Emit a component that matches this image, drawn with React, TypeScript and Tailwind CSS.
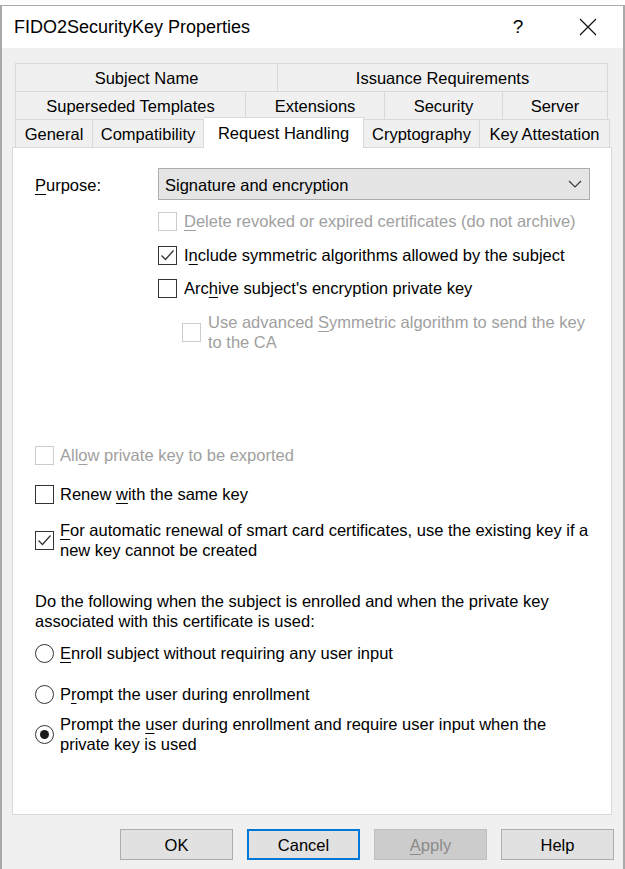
import React from 'react';

const U: React.FC<{ children: React.ReactNode }> = ({ children }) => (
  <span className="underline decoration-1 underline-offset-[3px]">{children}</span>
);

const Check: React.FC<{ checked?: boolean; disabled?: boolean }> = ({ checked, disabled }) => (
  <span
    className={
      'flex h-[19px] w-[19px] shrink-0 items-center justify-center border bg-white ' +
      (disabled ? 'border-[#cccccc]' : 'border-[#333333]')
    }
  >
    {checked && (
      <svg width="15" height="15" viewBox="0 0 15 15">
        <path d="M1.5 7.5 L5.5 11.5 L13.5 2.5" fill="none" stroke="#333333" strokeWidth="1.3" />
      </svg>
    )}
  </span>
);

const Radio: React.FC<{ checked?: boolean }> = ({ checked }) => (
  <span className="flex h-[19px] w-[19px] shrink-0 items-center justify-center rounded-full border border-[#333333] bg-white">
    {checked && <span className="h-[9px] w-[9px] rounded-full bg-[#1a1a1a]" />}
  </span>
);

type Tab = { label: string; w: number };

const row1: Tab[] = [
  { label: 'Subject Name', w: 263 },
  { label: 'Issuance Requirements', w: 330 },
];
const row2: Tab[] = [
  { label: 'Superseded Templates', w: 231 },
  { label: 'Extensions', w: 139 },
  { label: 'Security', w: 118 },
  { label: 'Server', w: 105 },
];

const TabRow: React.FC<{ tabs: Tab[] }> = ({ tabs }) => (
  <div className="flex h-[28px]">
    {tabs.map((t, i) => (
      <div
        key={t.label}
        style={{ width: t.w }}
        className={
          'flex items-center justify-center border-t border-r border-[#d9d9d9] bg-[#f0f0f0] pt-[1px] ' +
          (i === 0 ? 'border-l' : '')
        }
      >
        {t.label}
      </div>
    ))}
  </div>
);

const Button: React.FC<{ children: React.ReactNode; variant?: 'default' | 'focus' | 'disabled' }> = ({
  children,
  variant = 'default',
}) => {
  const cls =
    variant === 'focus'
      ? 'border-2 border-[#0078d7] bg-[#e1e1e1]'
      : variant === 'disabled'
        ? 'border border-[#bfbfbf] bg-[#cccccc] text-[#8a8a8a]'
        : 'border border-[#adadad] bg-[#e1e1e1]';
  return <div className={'flex h-[31px] w-[113px] items-center justify-center ' + cls}>{children}</div>;
};

export default function App() {
  return (
    <div className="h-[869px] w-[625px] overflow-hidden bg-white font-['Liberation_Sans',Arial,sans-serif] text-[16.5px] leading-[20px] text-black">
      <div className="h-[5px]" />
      <div className="flex h-[864px] flex-col border-t border-l-2 border-r-2 border-[#a9a9a9]">
        {/* title bar */}
        <div className="flex h-[42px] shrink-0 items-center bg-white pl-[12px]">
          <span className="flex-1 text-[18px]">FIDO2SecurityKey Properties</span>
          <span className="flex w-[70px] justify-center text-[19px]">?</span>
          <span className="flex w-[70px] justify-center">
            <svg width="18" height="18" viewBox="0 0 18 18">
              <path d="M1 1 L17 17 M17 1 L1 17" stroke="#111" strokeWidth="1.2" />
            </svg>
          </span>
        </div>

        <div className="flex-1 bg-[#f0f0f0] pt-[15px]">
          {/* tabs */}
          <div className="pl-[13px]">
            <TabRow tabs={row1} />
            <TabRow tabs={row2} />
            <div className="flex h-[28px] items-start">
              <div className="flex h-[28px] w-[78px] items-center justify-center border-t border-l border-r border-[#d9d9d9] pt-[1px]">
                General
              </div>
              <div className="flex h-[28px] w-[111px] items-center justify-center border-t border-r border-[#d9d9d9] pt-[1px]">
                Compatibility
              </div>
              <div className="relative z-10 -mt-[2px] flex h-[31px] w-[160px] items-start justify-center border-t border-r border-[#d9d9d9] bg-white pt-[5px]">
                Request Handling
              </div>
              <div className="flex h-[28px] w-[116px] items-center justify-center border-t border-r border-[#d9d9d9] pt-[1px]">
                Cryptography
              </div>
              <div className="flex h-[28px] w-[130px] items-center justify-center border-t border-r border-[#d9d9d9] pt-[1px]">
                Key Attestation
              </div>
            </div>
          </div>

          {/* panel */}
          <div className="ml-[10px] h-[668px] w-[600px] border border-[#d9d9d9] bg-white pt-[20px] pl-[22px]">
            <div className="flex h-[32px] items-center">
              <span className="w-[123px] pt-[2px]">
                <U>P</U>urpose:
              </span>
              <div className="flex h-[32px] w-[432px] items-center justify-between border border-[#adadad] bg-[#e5e5e5] pl-[6px] pr-[7px]">
                <span className="pt-[2px]">Signature and encryption</span>
                <svg width="14" height="8" viewBox="0 0 14 8">
                  <path d="M1 1 L7 7 L13 1" fill="none" stroke="#333" strokeWidth="1.1" />
                </svg>
              </div>
            </div>

            <div className="ml-[123px]">
              <div className="mt-[11px] flex h-[20px] items-center gap-[7px] text-[#a0a0a0]">
                <Check disabled />
                <span>
                  <U>D</U>elete revoked or expired certificates (do not archive)
                </span>
              </div>
              <div className="mt-[14px] flex h-[20px] items-center gap-[7px]">
                <Check checked />
                <span>
                  I<U>n</U>clude symmetric algorithms allowed by the subject
                </span>
              </div>
              <div className="mt-[13px] flex h-[20px] items-center gap-[7px]">
                <Check />
                <span>
                  Arc<U>h</U>ive subject's encryption private key
                </span>
              </div>
              <div className="mt-[14px] ml-[24px] flex items-center gap-[7px] text-[#a0a0a0]">
                <Check disabled />
                <span>
                  Use advanced <U>S</U>ymmetric algorithm to send the key
                  <br />
                  to the CA
                </span>
              </div>
            </div>

            <div className="mt-[93px] flex h-[20px] items-center gap-[6px] text-[#a0a0a0]">
              <Check disabled />
              <span>
                All<U>o</U>w private key to be exported
              </span>
            </div>
            <div className="mt-[19px] flex h-[20px] items-center gap-[6px]">
              <Check />
              <span>
                Renew <U>w</U>ith the same key
              </span>
            </div>
            <div className="mt-[16px] flex items-center gap-[6px]">
              <Check checked />
              <span>
                <U>F</U>or automatic renewal of smart card certificates, use the existing key if a
                <br />
                new key cannot be created
              </span>
            </div>

            <p className="mt-[31px]">
              Do the following when the subject is enrolled and when the private key
              <br />
              associated with this certificate is used:
            </p>
            <div className="mt-[12px] flex h-[20px] items-center gap-[6px]">
              <Radio />
              <span>
                <U>E</U>nroll subject without requiring any user input
              </span>
            </div>
            <div className="mt-[21px] flex h-[20px] items-center gap-[6px]">
              <Radio />
              <span>
                P<U>r</U>ompt the user during enrollment
              </span>
            </div>
            <div className="mt-[10px] flex items-center gap-[6px]">
              <Radio checked />
              <span>
                Prompt the <U>u</U>ser during enrollment and require user input when the
                <br />
                private key is used
              </span>
            </div>
          </div>

          {/* buttons */}
          <div className="mt-[14px] ml-[118px] flex gap-[14px]">
            <Button>OK</Button>
            <Button variant="focus">Cancel</Button>
            <Button variant="disabled">
              <span>
                <U>A</U>pply
              </span>
            </Button>
            <Button>Help</Button>
          </div>
        </div>
      </div>
    </div>
  );
}
